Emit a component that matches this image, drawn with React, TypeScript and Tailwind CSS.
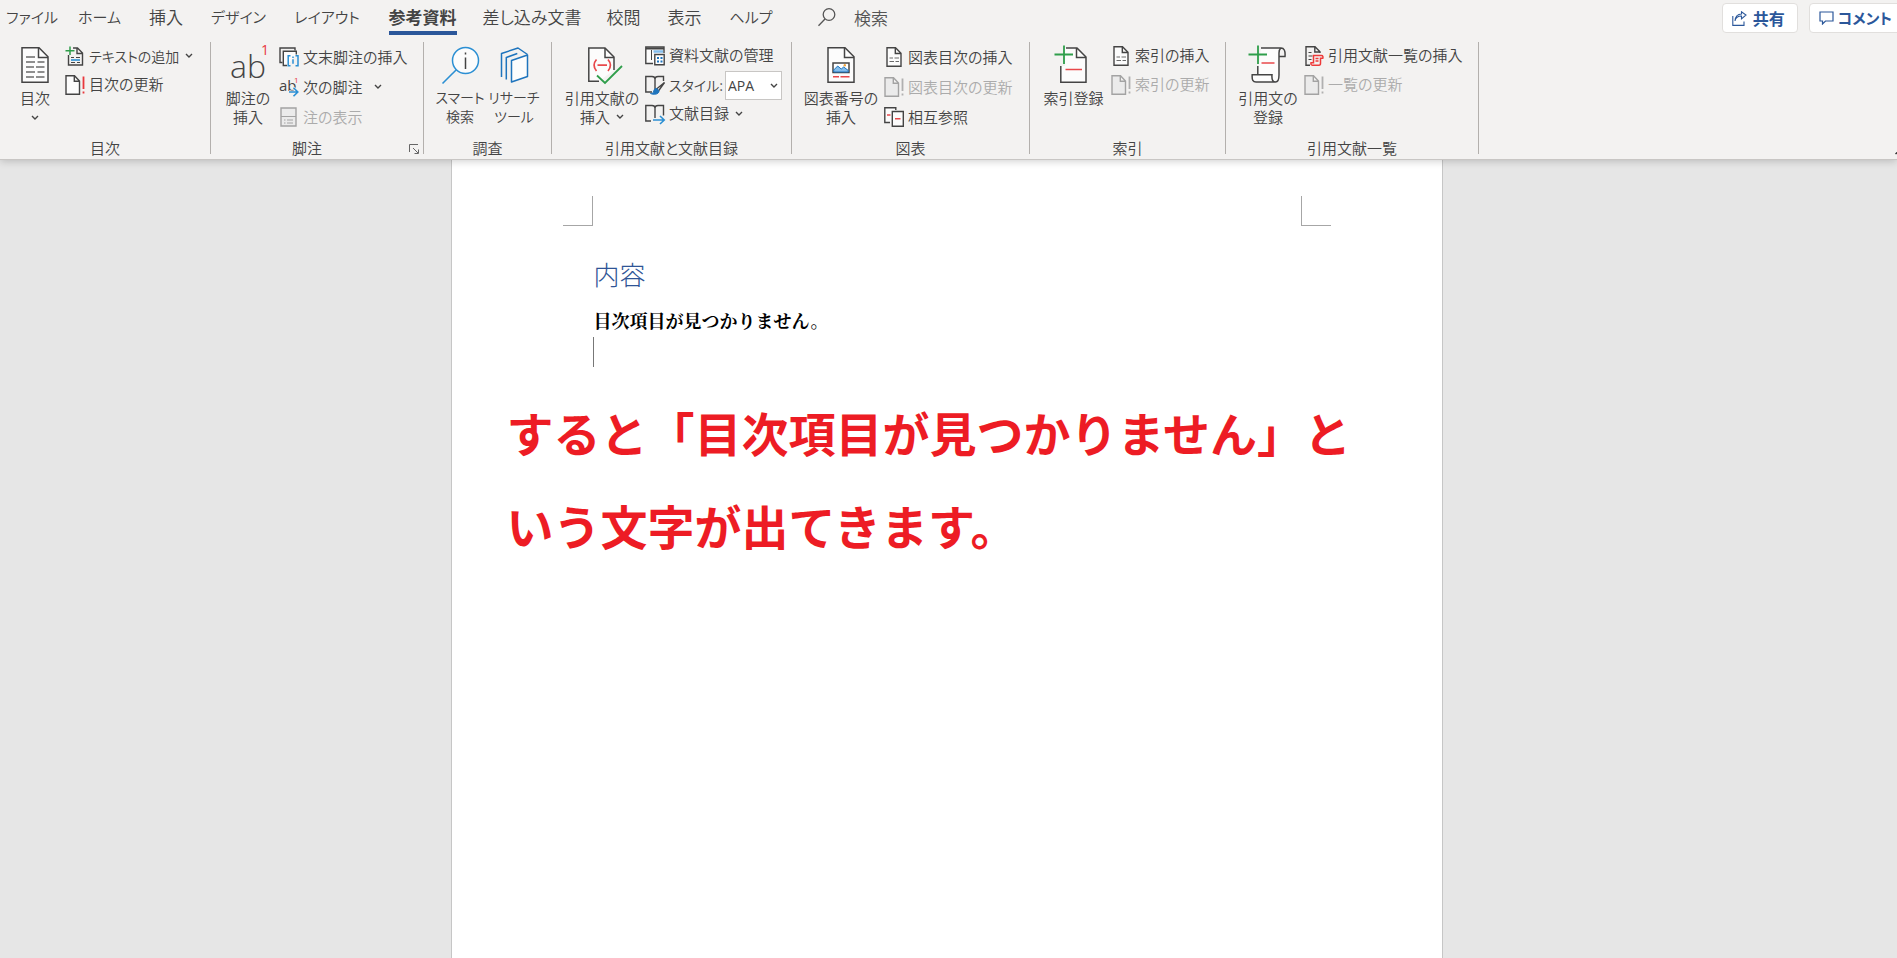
import type { ReactNode } from 'react';

type IconProps = { children: ReactNode };

function SmallIcon({ children }: IconProps) {
  return (
    <svg width="20" height="20" viewBox="0 0 20 20" fill="none" stroke="#444" strokeWidth="1.4" className="shrink-0 overflow-visible" aria-hidden="true">
      {children}
    </svg>
  );
}

function LargeIcon({ children }: IconProps) {
  return (
    <svg width="40" height="40" viewBox="0 0 40 40" fill="none" stroke="#444" strokeWidth="1.5" className="shrink-0 overflow-visible" aria-hidden="true">
      {children}
    </svg>
  );
}

function Chevron({ className = '' }: { className?: string }) {
  return (
    <svg width="8" height="6" viewBox="0 0 8 6" fill="none" stroke="#444" strokeWidth="1.4" className={`inline-block shrink-0 ${className}`} aria-hidden="true">
      <path d="M1 1l3 3 3-3" />
    </svg>
  );
}

/* Large icons */

const TocIcon = () => (
  <LargeIcon>
    <path d="M7 2.800h17l9 9v25.400H7z" fill="#fcfcfc" />
    <path d="M23.500 3v9.500H33" />
    <path d="M11 12h9M11 17h9M22.500 17h7M11 22h8M21 22h8.500M11 27h9M22.500 27h7M11 32h8M21 32h8.500" stroke="#6a6a6a" />
  </LargeIcon>
);

const FootnoteIcon = () => (
  <LargeIcon>
    <text x="2" y="33" fontSize="32" fontFamily="Open Sans, sans-serif" fontWeight="300" fill="#444" stroke="none">
      ab
      <tspan x="33" y="10" fontSize="14" fontWeight="400" fill="#e8383d">1</tspan>
    </text>
  </LargeIcon>
);

const SmartLookupIcon = () => (
  <LargeIcon>
    <circle cx="25.500" cy="15.500" r="13" fill="#fcfcfc" stroke="#2b8fd3" />
    <path d="M16.300 24.700L2.500 38.500" stroke="#2b8fd3" strokeWidth="1.600" />
    <path d="M25.500 12.500v11.500M25.500 7.500v2" />
  </LargeIcon>
);

const ResearchIcon = () => (
  <LargeIcon>
    <g stroke="#1e74bd" strokeLinejoin="round">
      <path d="M17.500 15.500l16-5.500v21.500l-16 5.500z" fill="#fcfcfc" />
      <path d="M33.500 10l-9.500-7L7.500 8.500V32M12 34.500V12l11.500-4M17.500 15.500l-5.500 19" stroke="none" />
      <path d="M33.500 9.500L24 3 7.500 8.500V32M12.300 34.500V12.500l11-4" />
    </g>
  </LargeIcon>
);

const CitationIcon = () => (
  <LargeIcon>
    <path d="M17 36.200H6.800V3H23l9 9v13" fill="#fcfcfc" />
    <path d="M23 3v9.500h9" />
    <path d="M14.500 14.500c-3 3.500-3 8 0 11.500M26 14.500c3 3.500 3 8 0 11.500M15.500 20.200h9.500" stroke="#e8484b" strokeWidth="1.700" />
    <path d="M15 30.500l8 7.500 17-17" stroke="#2f9e4b" strokeWidth="1.800" />
  </LargeIcon>
);

const CaptionIcon = () => (
  <LargeIcon>
    <path d="M7 2.800h17l9 9v25.400H7z" fill="#fcfcfc" />
    <path d="M23.500 3v9.500H33" />
    <path d="M12 18h16v9.500H12z" fill="#fff" />
    <path d="M12.700 25l4-4 3.500 3 2.500-2 4.600 3.500v1.500H12.700z" fill="#83bdec" stroke="#1e74bd" strokeWidth="1" />
    <circle cx="23.800" cy="20.300" r="1.200" fill="#eda13a" stroke="none" />
    <path d="M12 31.800h6M19.500 31.800h9" stroke="#e8484b" />
  </LargeIcon>
);

const MarkEntryIcon = () => (
  <LargeIcon>
    <path d="M6.800 21v16.200H32V12l-9-9H11v18z" fill="#fcfcfc" stroke="none" />
    <path d="M6.800 21v16.200H32V12l-9-9H12M22.500 3v9.500H32" />
    <path d="M10 .500v18.500M.500 9.500h18.500" stroke="#2f9e4b" strokeWidth="1.800" />
    <path d="M11.500 24.500H28" stroke="#e8484b" />
  </LargeIcon>
);

const MarkCitationIcon = () => (
  <LargeIcon>
    <path d="M13 3h19v27c0 5-1.500 7-4 7H8c-3 0-5-2-4-7.500h6z" fill="#fcfcfc" stroke="none" />
    <path d="M13 3h20c3 0 4.500 2.500 4 8.500h-5.500M33 3c-1.500 1-2 2.500-2 5v22c0 4-1 7-3.500 7s-4-2-3.500-7.300H4.200C3.800 35 5 37 8 37h19.500M9.800 21v8.500" />
    <path d="M10 .500v18.500M.500 9.500h18.500" stroke="#2f9e4b" strokeWidth="1.800" />
    <path d="M13.500 18h13" stroke="#e8484b" />
  </LargeIcon>
);

/* Small icons */

const AddTextIcon = () => (
  <SmallIcon>
    <path d="M3.500 9v10h14V7l-5-5H8M12 2v5.500h5" />
    <path d="M5 .500v8.500M.500 4.800h9" stroke="#2f9e4b" strokeWidth="1.500" />
    <path d="M6 11.500h3M11 11.500h4M6 16.500h4M12 16.500h3" strokeWidth="1" />
    <path d="M6 14h9" stroke="#2b8fd3" strokeWidth="1.600" />
  </SmallIcon>
);

function UpdateIcon({ disabled = false }: { disabled?: boolean }) {
  return (
    <SmallIcon>
      <path d="M1 .800h8.500l5 5.200v13.200H1zM9.300 1v5.300h5" stroke={disabled ? '#a3a3a3' : '#444'} fill={disabled ? '#ebebeb' : '#fcfcfc'} />
      <path d="M18.500 1.500v12.500M18.500 16.500v2" stroke={disabled ? '#b0b0b0' : '#e8383d'} strokeWidth="1.800" />
    </SmallIcon>
  );
}

const EndnoteIcon = () => (
  <SmallIcon>
    <path d="M3.500 15.500H1V1h15v2.500" />
    <path d="M8 18.500H4.300V4.300h13V7.500" fill="#fcfcfc" />
    <path d="M11.500 8.700H9.200v10h2.300M16.500 8.700h2.500v10h-2.500M14 12.200v4.500M14 9.500v1.500" stroke="#2b8fd3" strokeWidth="1.500" />
  </SmallIcon>
);

const NextFootnoteIcon = () => (
  <SmallIcon>
    <text x="0" y="14" fontSize="15" fontFamily="Open Sans, sans-serif" fontWeight="400" fill="#444" stroke="none">
      ab
      <tspan x="15" y="6" fontSize="8" fill="#e8383d">1</tspan>
    </text>
    <path d="M10 15h8.500M14.500 10.800l4.300 4.200-4.300 4.200" stroke="#f3f2f1" strokeWidth="3" />
    <path d="M10 15h8.500M14.500 10.800l4.300 4.200-4.300 4.200" stroke="#2b8fd3" strokeWidth="1.600" />
  </SmallIcon>
);

const ShowNotesIcon = () => (
  <SmallIcon>
    <path d="M2 1h15v18H2z" stroke="#a3a3a3" fill="#ebebeb" />
    <path d="M2 9.500h15M5 13h1.500M8 13h6M5 16h1.500M8 16h6" stroke="#a3a3a3" strokeWidth="1.200" />
  </SmallIcon>
);

const ManageSourcesIcon = () => (
  <SmallIcon>
    <path d="M8 17.500H.800V1H19v6" fill="#fcfcfc" />
    <path d="M1 2.500h18" strokeWidth="2" />
    <path d="M8.500 5.500H18" stroke="#83bdec" strokeWidth="2.500" />
    <path d="M6.500 4v10" strokeWidth="1" />
    <path d="M9.800 8.500H19.200v10.300H9.800z" fill="#fff" />
    <path d="M12 12h2M15.500 12h2M12 15.500h2M15.500 15.500h2" stroke="#1e74bd" strokeWidth="2" />
  </SmallIcon>
);

const StyleIcon = () => (
  <SmallIcon>
    <path d="M7 17H.800V1.500H7c2 0 3 .800 3 2.500 0-1.700 1-2.500 3-2.500h5.500V6M10 4v11" />
    <path d="M19.500 7.500l-8 6.500 2 2z" fill="#fcfcfc" />
    <path d="M11.800 13.500c-2.500-.500-3 2-3.300 3.500-.300 1-1.500 1.500-3 1.500 3 1.500 8.500 1 8.500-2.500z" fill="#1e74bd" stroke="#1e74bd" strokeWidth="1" />
  </SmallIcon>
);

const BibliographyIcon = () => (
  <SmallIcon>
    <path d="M6 17H.800V1.500H7c2 0 3 .800 3 2.500 0-1.700 1-2.500 3-2.500h5.500v10M10 4v10" />
    <path d="M8 16h11M15 12l4.200 4-4.200 4" stroke="#2b8fd3" strokeWidth="1.600" />
  </SmallIcon>
);

const TableIcon = () => (
  <SmallIcon>
    <path d="M3 .800h8.500l5.500 5.500v12.900H3zM11.300 1v5.500H17" fill="#fcfcfc" />
    <path d="M5.500 11h3.500M10.500 11H15M5.500 14.500h4.500M11.500 14.500H15" strokeWidth="1.200" stroke="#6a6a6a" />
  </SmallIcon>
);

const CrossReferenceIcon = () => (
  <SmallIcon>
    <path d="M6 15.500H.800V.800h11V3" fill="#fcfcfc" />
    <path d="M8.300 4.500h11v14.700h-11z" fill="#fcfcfc" />
    <path d="M3 8h3.500M11 11.800h5.500" stroke="#e8484b" strokeWidth="1.600" />
  </SmallIcon>
);

const AuthoritiesIcon = () => (
  <SmallIcon>
    <path d="M6 19.200H2V.800h9l5 5V7M10.800 1v5H16" />
    <path d="M4.500 6.500h3M4.500 10h4M4.500 13.500h3" strokeWidth="1.100" />
    <path d="M9.500 9.500h8c1.500 0 1.700 1.500 1.300 2.700h-2.300v5c0 1.500-.500 2-1.500 2H8.500c-1.500 0-1.800-1-1.500-2.500h2.500zM11.500 12.500h3M11.500 15h3" stroke="#ee3a3a" strokeWidth="1.500" />
  </SmallIcon>
);

/* Ribbon building blocks */

function Group({ label, className, launcher = false, children }: { label: string; className: string; launcher?: boolean; children: ReactNode }) {
  return (
    <section aria-label={label} className={`relative flex h-28 shrink-0 flex-col border-r border-[#b3b0ad] ${className}`}>
      <div className="flex flex-1 items-start">{children}</div>
      <div className={`text-center leading-3 ${launcher ? 'pr-5' : ''}`}>{label}</div>
      {launcher && (
        <button type="button" aria-label={`${label}の詳細設定`} className="absolute right-1 bottom-0">
          <svg width="10" height="10" viewBox="0 0 10 10" fill="none" stroke="#666" aria-hidden="true">
            <path d="M.500 8V.500H9M4 4l5 5M9.500 5.500v4h-4" />
          </svg>
        </button>
      )}
    </section>
  );
}

function LargeButton({ icon, lines, chevron, className }: { icon: ReactNode; lines: string[]; chevron?: 'below' | 'inline'; className: string }) {
  return (
    <button type="button" className={`flex shrink-0 flex-col items-center pt-[3px] leading-[19px] whitespace-nowrap ${className}`}>
      {icon}
      <span className="mt-[3px]">{lines[0]}</span>
      {lines[1] && (
        <span className="flex items-center gap-1.5">
          {lines[1]}
          {chevron === 'inline' && <Chevron />}
        </span>
      )}
      {chevron === 'below' && <Chevron className="mt-2" />}
    </button>
  );
}

function SmallButton({ icon, label, chevron = '', disabled = false, className = 'h-[29px]' }: { icon: ReactNode; label: string; chevron?: string; disabled?: boolean; className?: string }) {
  return (
    <button type="button" disabled={disabled} className={`flex items-center gap-1 pb-0.5 whitespace-nowrap disabled:text-[#ababab] ${className}`}>
      {icon}
      {label}
      {chevron && <Chevron className={chevron} />}
    </button>
  );
}

const tabs = [
  { label: 'ファイル', style: 'w-[64px] text-[15px]' },
  { label: 'ホーム', style: 'w-[71px] text-[15px]' },
  { label: '挿入', style: 'w-[62px]' },
  { label: 'デザイン', style: 'w-[83px] text-[15px]' },
  { label: 'レイアウト', style: 'w-[94px] text-[15px]' },
  { label: '参考資料', style: 'w-[97px]', active: true },
  { label: '差し込み文書', style: 'w-[122px]' },
  { label: '校閲', style: 'w-[61px]' },
  { label: '表示', style: 'w-[61px]' },
  { label: 'ヘルプ', style: 'w-[72px] text-[15px]' },
];

export default function App() {
  return (
    <div className="flex h-screen flex-col overflow-hidden bg-[#e6e6e6] font-['Noto_Sans_CJK_JP',sans-serif] text-[#444]">
      <header className="relative z-10 border-b border-[#c8c6c4] bg-[#f3f2f1] font-[350] shadow-[0_1px_8px_rgba(0,0,0,0.2)] [font-feature-settings:'palt']">
        <div className="flex h-[38px] items-start text-[17px]">
          <nav className="flex">
            {tabs.map((tab) => (
              <a key={tab.label} href="#" aria-current={tab.active ? 'page' : undefined} className={`flex shrink-0 justify-center whitespace-nowrap ${tab.style}`}>
                <span className={`h-[35px] leading-[34px] ${tab.active ? 'border-b-4 border-[#2b579a] font-bold' : ''}`}>{tab.label}</span>
              </a>
            ))}
          </nav>
          <label className="ml-[31px] flex h-[35px] items-center gap-[18px]">
            <svg width="18" height="19" viewBox="0 0 18 19" fill="none" stroke="#555" strokeWidth="1.300" aria-hidden="true">
              <circle cx="11" cy="6.500" r="5.800" />
              <path d="M7 11L.500 17.800" />
            </svg>
            <input type="text" placeholder="検索" aria-label="検索" className="w-40 bg-transparent outline-none placeholder:text-[#555]" />
          </label>
          <div className="-mr-2 ml-auto flex gap-[11px] pt-[3px] text-base font-bold text-[#2b579a]">
            <button type="button" className="flex h-[30px] items-center gap-1.5 rounded border border-[#e1dfdd] bg-white pr-3 pl-[9px]">
              <svg width="15" height="15" viewBox="0 0 15 15" fill="none" stroke="#2b579a" strokeWidth="1.100" aria-hidden="true">
                <path d="M.800 5v9.400H12V10.500M3 10c.500-3 2.500-5 6.500-5V7.800L14 4 9.500.800V3C5.500 3 3.300 6 3 10z" />
              </svg>
              共有
            </button>
            <button type="button" className="flex h-[30px] items-center gap-1 rounded border border-[#e1dfdd] bg-white pr-3 pl-[9px] text-[15px] whitespace-nowrap">
              <svg width="15" height="14" viewBox="0 0 15 14" fill="none" stroke="#2b579a" strokeWidth="1.200" aria-hidden="true">
                <path d="M1 1h13v9H6.500L3.500 13v-3H1z" />
              </svg>
              コメント
            </button>
          </div>
        </div>

        <div className="flex h-[121px] items-start pt-1 text-[15px]">
          <Group label="目次" className="w-[211px]">
            <LargeButton icon={<TocIcon />} lines={['目次']} chevron="below" className="ml-[5px] w-[60px]" />
            <div>
              <SmallButton icon={<AddTextIcon />} label="テキストの追加" chevron="ml-0.5" className="h-[29px] text-sm" />
              <SmallButton icon={<UpdateIcon />} label="目次の更新" />
            </div>
          </Group>

          <Group label="脚注" className="w-[213px]" launcher>
            <LargeButton icon={<FootnoteIcon />} lines={['脚注の', '挿入']} className="ml-1.5 w-[62px]" />
            <div className="pt-px">
              <SmallButton icon={<EndnoteIcon />} label="文末脚注の挿入" className="h-[30px]" />
              <SmallButton icon={<NextFootnoteIcon />} label="次の脚注" chevron="ml-2" className="h-[30px]" />
              <SmallButton icon={<ShowNotesIcon />} label="注の表示" disabled className="h-[30px]" />
            </div>
          </Group>

          <Group label="調査" className="w-[128px]">
            <LargeButton icon={<SmartLookupIcon />} lines={['スマート', '検索']} className="ml-[9px] w-[54px] text-sm" />
            <LargeButton icon={<ResearchIcon />} lines={['リサーチ', 'ツール']} className="w-[54px] text-sm" />
          </Group>

          <Group label="引用文献と文献目録" className="w-60">
            <LargeButton icon={<CitationIcon />} lines={['引用文献の', '挿入']} chevron="inline" className="ml-[7px] w-[86px]" />
            <div>
              <SmallButton icon={<ManageSourcesIcon />} label="資料文献の管理" />
              <div className="flex h-[29px] items-center">
                <label htmlFor="citation-style" className="flex w-20 items-center gap-1 pb-0.5 text-sm whitespace-nowrap">
                  <StyleIcon />
                  スタイル:
                </label>
                <div className="relative">
                  <select id="citation-style" className="h-[29px] w-[57px] appearance-none border border-[#c8c6c4] bg-white pl-0.5 font-['Open_Sans',sans-serif] text-sm font-normal">
                    <option>APA</option>
                  </select>
                  <Chevron className="pointer-events-none absolute top-3 right-1" />
                </div>
              </div>
              <SmallButton icon={<BibliographyIcon />} label="文献目録" chevron="ml-0.5" />
            </div>
          </Group>

          <Group label="図表" className="w-[238px]">
            <LargeButton icon={<CaptionIcon />} lines={['図表番号の', '挿入']} className="ml-1.5 w-[86px]" />
            <div className="pt-px">
              <SmallButton icon={<TableIcon />} label="図表目次の挿入" className="h-[30px]" />
              <SmallButton icon={<UpdateIcon disabled />} label="図表目次の更新" disabled className="h-[30px]" />
              <SmallButton icon={<CrossReferenceIcon />} label="相互参照" className="h-[30px]" />
            </div>
          </Group>

          <Group label="索引" className="w-[196px]">
            <LargeButton icon={<MarkEntryIcon />} lines={['索引登録']} className="ml-1.5 w-[75px]" />
            <div>
              <SmallButton icon={<TableIcon />} label="索引の挿入" />
              <SmallButton icon={<UpdateIcon disabled />} label="索引の更新" disabled />
            </div>
          </Group>

          <Group label="引用文献一覧" className="w-[253px]">
            <LargeButton icon={<MarkCitationIcon />} lines={['引用文の', '登録']} className="ml-1.5 w-[72px]" />
            <div>
              <SmallButton icon={<AuthoritiesIcon />} label="引用文献一覧の挿入" />
              <SmallButton icon={<UpdateIcon disabled />} label="一覧の更新" disabled />
            </div>
          </Group>

          <button type="button" aria-label="リボンを折りたたむ" className="-mr-2 ml-auto self-end pb-1">
            <svg width="10" height="6" viewBox="0 0 10 6" fill="none" stroke="#333" strokeWidth="1.500" aria-hidden="true">
              <path d="M.500 5L5 1l4.500 4" />
            </svg>
          </button>
        </div>
      </header>

      <main className="flex min-h-0 flex-1 justify-center">
        <article className="mr-1 w-[992px] shrink-0 border-x border-[#c6c6c6] bg-white">
          <div className="flex justify-between px-[111px] pt-9">
            <div className="size-[30px] border-r border-b border-[#a6a6a6]" />
            <div className="size-[30px] border-b border-l border-[#a6a6a6]" />
          </div>
          <div className="pl-[142px] text-black">
            <h1 className="pt-7 text-[26px] leading-10 font-light text-[#2f5496]">内容</h1>
            <p className="pt-[9px] font-['Noto_Serif_CJK_JP','Noto_Sans_CJK_JP',serif] text-lg leading-[34px] font-bold">目次項目が見つかりません。</p>
            <div className="-ml-px h-[30px] w-px bg-[#777]" />
          </div>
          <p className="pt-[18px] pl-[55px] text-[47px] leading-[93px] font-bold text-[#ed1c24]">
            すると「目次項目が見つかりません」と
            <br />
            いう文字が出てきます。
          </p>
        </article>
      </main>
    </div>
  );
}
